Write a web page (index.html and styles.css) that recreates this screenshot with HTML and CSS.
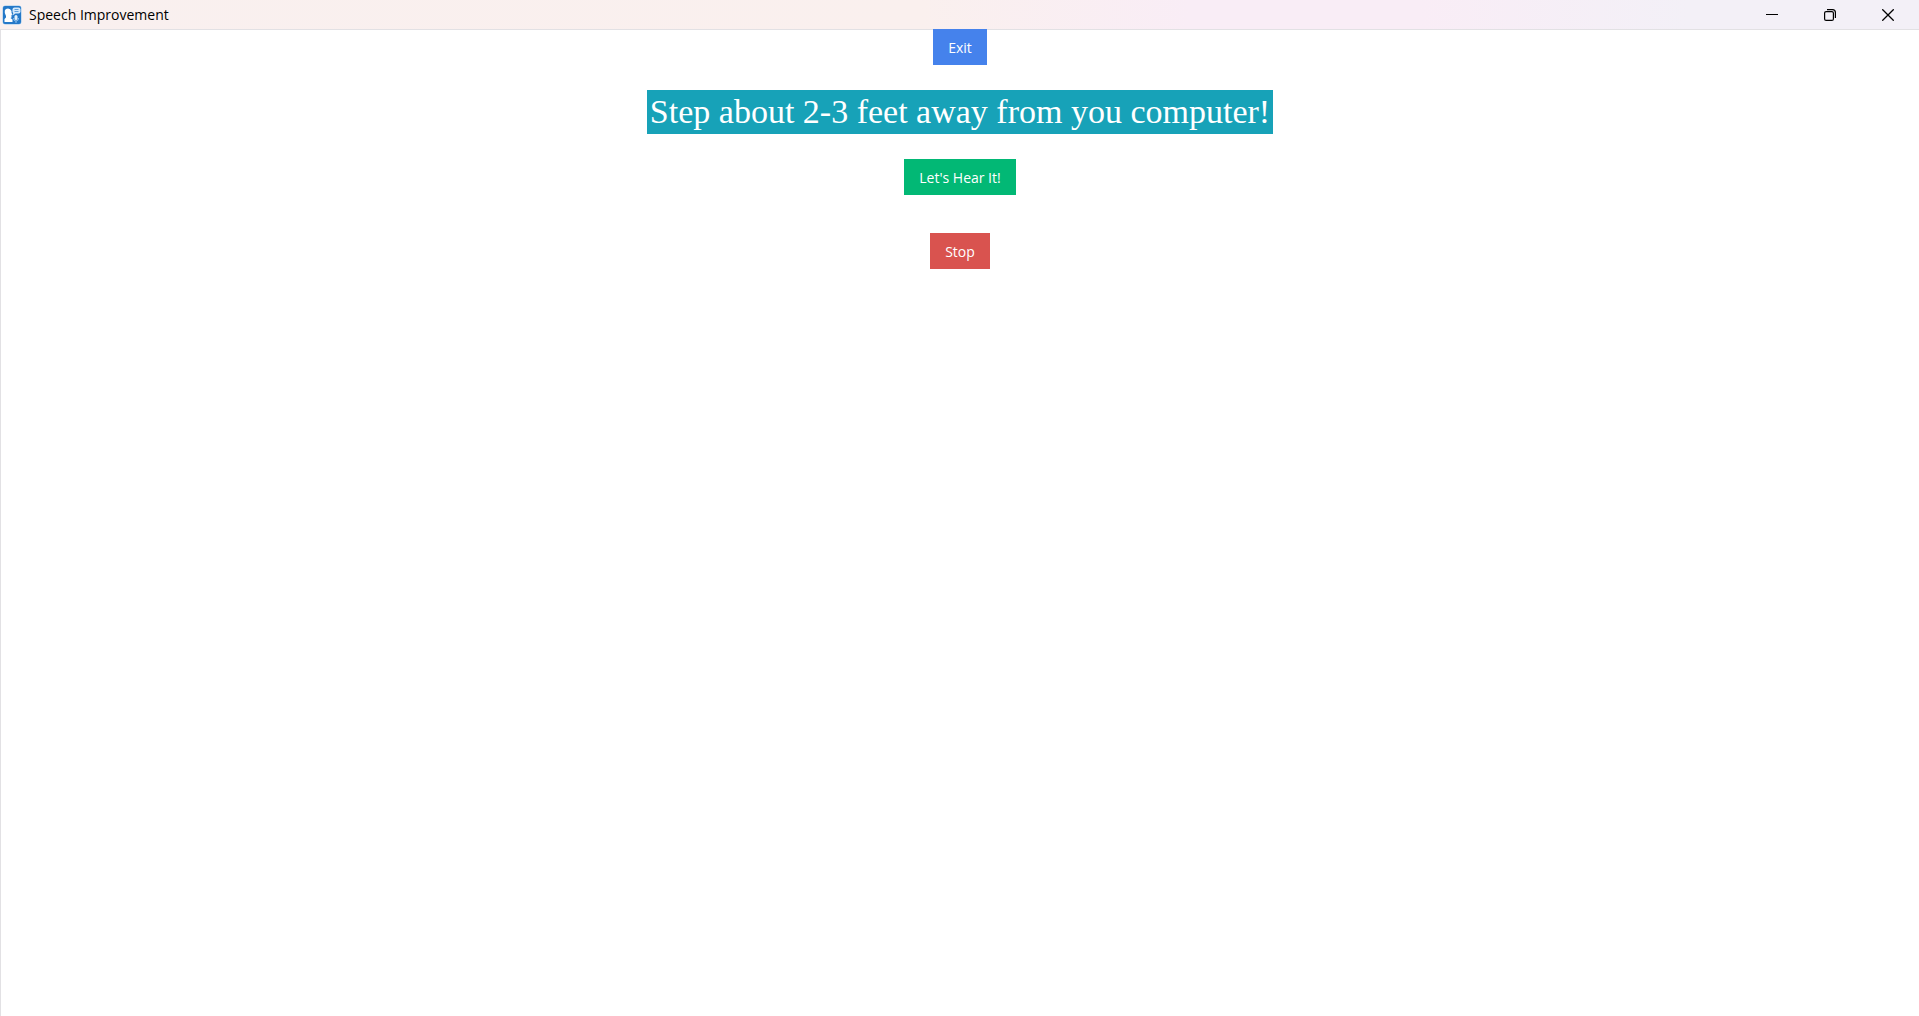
FILE: index.html
```html
<!DOCTYPE html>
<html lang="en">

    <head>
        <meta charset="UTF-8">
        <meta name="viewport" content="width=device-width, initial-scale=1.0">
        <title>Speech Improvement</title>
        <link rel="stylesheet" href="styles.css">
    </head>

    <body>
        <header class="title-bar">
            <svg class="app-icon" width="20" height="20" viewBox="0 0 20 20" aria-hidden="true">
                <rect x="0.5" y="0.5" width="19" height="19" rx="3" fill="#9cc8ee"/>
                <rect x="1" y="1" width="18" height="18" rx="2" fill="#2478c8"/>
                <path d="M2.500 17v-3l1.500-1.500V11L2.800 8V5.500Q3.500 3.500 6 3.500T9.500 6v2l1 1.500-1 .5v2.500L8.500 13l2 1.500V17z" fill="#fff"/>
                <rect x="10.500" y="2.500" width="8" height="6" rx="2" fill="#d3e8fa"/>
                <path d="M11.500 7.500l-1 3 3-2z" fill="#d3e8fa"/>
                <path d="M12.500 4.500h4M12.500 6.500h4" stroke="#5d9fdc" stroke-width="1"/>
                <rect x="12.500" y="10" width="3" height="5" rx="1.500" fill="#e4f1fc"/>
                <path d="M11.500 13q0 3 2.500 3t2.500-3M14 16v2" fill="none" stroke="#8fc0ec" stroke-width="1"/>
            </svg>
            <span class="title">Speech Improvement</span>
            <div class="window-buttons">
                <button type="button" aria-label="Minimize">
                    <svg width="12" height="12" viewBox="0 0 12 12"><path d="M0 5.500h12" stroke="#000"/></svg>
                </button>
                <button type="button" aria-label="Restore">
                    <svg width="12" height="12" viewBox="0 0 12 12" fill="none" stroke="#000" stroke-width="1.200">
                        <rect x="0.600" y="2.600" width="8.800" height="8.800" rx="1.500"/>
                        <path d="M3 .6h5.500q2.900 0 2.900 2.900V9"/>
                    </svg>
                </button>
                <button type="button" aria-label="Close">
                    <svg width="12" height="12" viewBox="0 0 12 12"><path d="M.3.3l11.400 11.400M11.700.3L.3 11.700" stroke="#000" stroke-width="1.300"/></svg>
                </button>
            </div>
        </header>

        <main class="container">
            <button type="button" class="btn exit">Exit</button>
            <h1>Step about 2-3 feet away from you computer!</h1>
            <button type="button" class="btn hear">Let's Hear It!</button>
            <button type="button" class="btn stop">Stop</button>
        </main>
    </body>

</html>
```

FILE: styles.css
```css
* {
    margin: 0;
    padding: 0;
    box-sizing: border-box;
}

body {
    font-family: "Open Sans", "Noto Sans", sans-serif;
    background-color: #fff;
    min-height: 100vh;
    display: flex;
    flex-direction: column;
}

.title-bar {
    display: flex;
    align-items: center;
    height: 29px;
    padding: 0 2px;
    background: linear-gradient(to right, #f9f0ef 0%, #faf0ee 48%, #f9edf6 62%, #f9edf6 74%, #f3f0f7 88%, #f3f0f7 100%);
    box-shadow: 0 1px 0 #e2e1e4;
}

.title {
    margin-left: 7px;
    font-size: 14px;
    line-height: 20px;
    color: #000;
}

.window-buttons {
    display: flex;
    margin-left: auto;
}

.window-buttons button {
    display: flex;
    align-items: center;
    justify-content: center;
    width: 58px;
    height: 28px;
    border: none;
    background: none;
}

.window-buttons button:hover {
    background-color: #e5e1ea;
}

.container {
    flex: 1;
    display: flex;
    flex-direction: column;
    align-items: center;
    border-left: 1px solid #e2e1e4;
}

h1 {
    margin: 25px 0;
    padding: 0 3px;
    font-family: "Liberation Serif", "Times New Roman", serif;
    font-size: 34px;
    font-weight: normal;
    line-height: 44px;
    color: #fff;
    background-color: #17a2b8;
}

.btn {
    height: 36px;
    padding: 0 15px;
    border: none;
    font-family: inherit;
    font-size: 14px;
    color: #fff;
    cursor: pointer;
}

.exit {
    background-color: #4582ec;
}

.hear {
    background-color: #02b875;
}

.stop {
    margin-top: 13px;
    background-color: #d9534f;
}

.hear + .stop {
    margin-top: 38px;
}
```
